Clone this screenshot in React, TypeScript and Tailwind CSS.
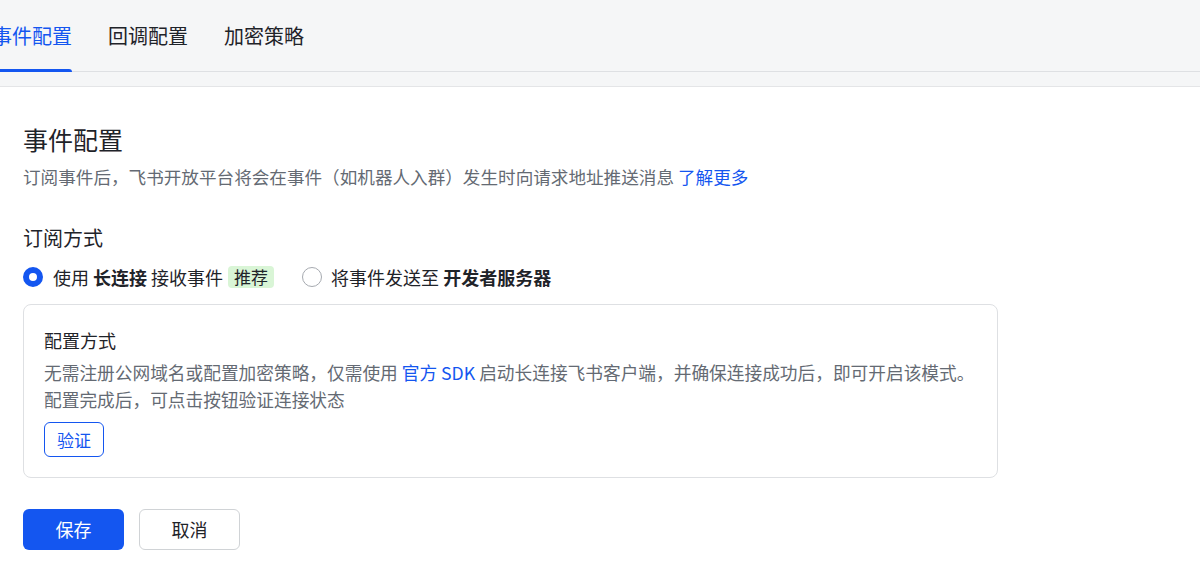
const font = { fontFamily: '"Noto Sans CJK SC", "Noto Sans", sans-serif' };

const tabs = ["事件配置", "回调配置", "加密策略"];

export default function App() {
  return (
    <div className="w-[1200px] h-[580px] bg-white overflow-hidden text-[#1f2329]" style={font}>
      <div className="bg-[#f5f6f7]">
        <div className="h-[72px] border-b border-[#dee0e3] flex items-stretch gap-[36px] -ml-2">
          {tabs.map((t, i) => (
            <div key={t} className="relative flex items-center">
              <span className={`text-[20px] leading-none ${i === 0 ? "text-[#1456f0]" : "text-[#1f2329]"}`}>
                {t}
              </span>
              {i === 0 && (
                <div className="absolute left-0 right-0 bottom-[-1px] h-[3px] rounded-t bg-[#1456f0]" />
              )}
            </div>
          ))}
        </div>
        <div className="h-[15px] border-b border-[#e4e5e7]" />
      </div>

      <div className="pl-[23px] pt-[35px]">
        <h1 className="text-[25px] leading-[34px] font-normal">事件配置</h1>
        <p className="mt-[8px] text-[17.6px] leading-[26px] text-[#646a73]">
          订阅事件后，飞书开放平台将会在事件（如机器人入群）发生时向请求地址推送消息{" "}
          <span className="text-[#1456f0]">了解更多</span>
        </p>

        <h2 className="mt-[34px] text-[20px] leading-[28px] font-normal">订阅方式</h2>

        <div className="mt-[13px] flex items-center h-[24px] text-[18px]">
          <div className="flex items-center">
            <span className="w-[20px] h-[20px] rounded-full border-[6px] border-[#1456f0] bg-white" />
            <span className="ml-[10px]">使用 <b className="font-bold">长连接</b> 接收事件</span>
            <span className="ml-[5px] h-[22px] px-[6px] rounded bg-[#d9f5d6] text-[17px] leading-[22px] text-[#1f2329]">
              推荐
            </span>
          </div>
          <div className="flex items-center ml-[28px]">
            <span className="w-[20px] h-[20px] rounded-full border border-[#a6aab0] bg-white" />
            <span className="ml-[9px]">将事件发送至 <b className="font-bold">开发者服务器</b></span>
          </div>
        </div>

        <div className="mt-[15px] w-[975px] h-[174px] rounded-lg border border-[#dee0e3] px-[20px] pt-[22px]">
          <div className="text-[18px] leading-[26px]">配置方式</div>
          <div className="mt-[6px] text-[17.7px] leading-[27px] text-[#646a73] whitespace-nowrap">
            <div>
              无需注册公网域名或配置加密策略，仅需使用 <span className="text-[#1456f0]">官方 SDK</span>{" "}
              启动长连接飞书客户端，并确保连接成功后，即可开启该模式。
            </div>
            <div>配置完成后，可点击按钮验证连接状态</div>
          </div>
          <button className="mt-[9px] w-[60px] h-[35px] rounded-md border border-[#1456f0] text-[#1456f0] text-[17px] bg-white">
            验证
          </button>
        </div>

        <div className="mt-[31px] flex gap-[15px]">
          <button className="w-[101px] h-[41px] rounded-md bg-[#1456f0] text-white text-[18px]">保存</button>
          <button className="w-[101px] h-[41px] rounded-md border border-[#d0d3d6] bg-white text-[18px] text-[#1f2329]">
            取消
          </button>
        </div>
      </div>
    </div>
  );
}
